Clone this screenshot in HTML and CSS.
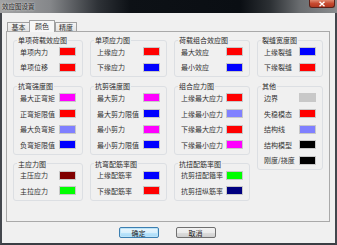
FILE: index.html
```html
<!DOCTYPE html>
<html lang="zh-CN">
<head>
<meta charset="utf-8">
<title>效应图设置</title>
<link rel="stylesheet" href="styles.css">
</head>
<body>
<div class="window">
  <div class="titlebar">
    <span class="title">效应图设置</span>
    <span class="close"><svg width="8" height="6" viewBox="0 0 8 6"><path d="M1.5 0.8 L6.5 5.2 M6.5 0.8 L1.5 5.2" stroke="#fff" stroke-width="1.4" fill="none"/></svg></span>
  </div>
  <div class="frame">
    <div class="tabs">
      <div class="tab tab-basic">基本</div>
      <div class="tab tab-active">颜色</div>
      <div class="tab tab-prec">精度</div>
    </div>
    <div class="panel">
      <div class="groups">
        <fieldset class="group">
          <legend>单项荷载效应图</legend>
          <div class="item"><span>单项内力</span><i class="sw red"></i></div>
          <div class="item"><span>单项位移</span><i class="sw red"></i></div>
        </fieldset>
        <fieldset class="group">
          <legend>单项应力图</legend>
          <div class="item"><span>上缘应力</span><i class="sw red"></i></div>
          <div class="item"><span>下缘应力</span><i class="sw blue"></i></div>
        </fieldset>
        <fieldset class="group">
          <legend>荷载组合效应图</legend>
          <div class="item"><span>最大效应</span><i class="sw red"></i></div>
          <div class="item"><span>最小效应</span><i class="sw blue"></i></div>
        </fieldset>
        <fieldset class="group">
          <legend>裂缝宽度图</legend>
          <div class="item"><span>上缘裂缝</span><i class="sw blue"></i></div>
          <div class="item"><span>下缘裂缝</span><i class="sw red"></i></div>
        </fieldset>

        <fieldset class="group">
          <legend>抗弯强度图</legend>
          <div class="item"><span>最大正弯矩</span><i class="sw magenta"></i></div>
          <div class="item"><span>正弯矩限值</span><i class="sw red"></i></div>
          <div class="item"><span>最大负弯矩</span><i class="sw lavender"></i></div>
          <div class="item"><span>负弯矩限值</span><i class="sw blue"></i></div>
        </fieldset>
        <fieldset class="group">
          <legend>抗剪强度图</legend>
          <div class="item"><span>最大剪力</span><i class="sw magenta"></i></div>
          <div class="item"><span>最大剪力限值</span><i class="sw blue"></i></div>
          <div class="item"><span>最小剪力</span><i class="sw magenta"></i></div>
          <div class="item"><span>最小剪力限值</span><i class="sw blue"></i></div>
        </fieldset>
        <fieldset class="group">
          <legend>组合应力图</legend>
          <div class="item"><span>上缘最大应力</span><i class="sw red"></i></div>
          <div class="item"><span>上缘最小应力</span><i class="sw lavender"></i></div>
          <div class="item"><span>下缘最大应力</span><i class="sw red"></i></div>
          <div class="item"><span>下缘最小应力</span><i class="sw magenta"></i></div>
        </fieldset>
        <fieldset class="group group-other">
          <legend>其他</legend>
          <div class="item"><span>边界</span><i class="sw grey"></i></div>
          <div class="item"><span>失稳模态</span><i class="sw red"></i></div>
          <div class="item"><span>结构线</span><i class="sw lavender"></i></div>
          <div class="item"><span>结构模型</span><i class="sw black"></i></div>
          <div class="item"><span>刚度/挠度</span><i class="sw black"></i></div>
        </fieldset>

        <fieldset class="group">
          <legend>主应力图</legend>
          <div class="item"><span>主压应力</span><i class="sw darkred"></i></div>
          <div class="item"><span>主拉应力</span><i class="sw green"></i></div>
        </fieldset>
        <fieldset class="group">
          <legend>抗弯配筋率图</legend>
          <div class="item"><span>上缘配筋率</span><i class="sw blue"></i></div>
          <div class="item"><span>下缘配筋率</span><i class="sw red"></i></div>
        </fieldset>
        <fieldset class="group">
          <legend>抗扭配筋率图</legend>
          <div class="item"><span>抗剪扭配箍率</span><i class="sw green"></i></div>
          <div class="item"><span>抗剪扭纵筋率</span><i class="sw navy"></i></div>
        </fieldset>
      </div>
    </div>
    <div class="buttons">
      <div class="btn btn-default">确定</div>
      <div class="btn">取消</div>
    </div>
  </div>
</div>
</body>
</html>
```

FILE: styles.css
```css
html, body {
  margin: 0;
  padding: 0;
  background: #3c4046;
}
body {
  font-family: "Noto Sans CJK SC", "Noto Sans", sans-serif;
  font-size: 7px;
  color: #333;
}
.window {
  width: 337px;
  height: 245px;
  display: flex;
  flex-direction: column;
  overflow: hidden;
}
.titlebar {
  height: 13px;
  flex: none;
  display: flex;
  align-items: flex-start;
  background: linear-gradient(to right, #a2a3a4 0px, #85878a 50px, #2e3237 98px, #0d1116 130px, #0a0e13 240px, #2c3034 270px, #6a6d70 300px, #8a8c8e 337px);
}
.title {
  padding-left: 2px;
  line-height: 12px;
  font-size: 6.5px;
  color: #1c1c1c;
  text-shadow: 0 0 2px #d8d8d8, 0 0 2px #d8d8d8;
}
.close {
  margin-left: auto;
  margin-right: 2px;
  width: 26px;
  height: 8px;
  box-sizing: border-box;
  border: 1px solid #5a2018;
  border-top: none;
  border-radius: 0 0 3px 3px;
  background: linear-gradient(#e08a70, #c74a30 50%, #b03820);
  display: flex;
  align-items: center;
  justify-content: center;
}
.close svg { display: block; }
.frame {
  flex: 1;
  background: #f0f0f0;
  border-left: 2px solid #43474d;
  border-right: 2px solid #43474d;
  border-bottom: 2px solid #3a3e44;
  padding: 7px 5px 0 4px;
  display: flex;
  flex-direction: column;
}
.tabs {
  height: 11px;
  display: flex;
  align-items: flex-end;
  padding-left: 1px;
  flex: none;
}
.tab {
  box-sizing: border-box;
  height: 9px;
  border: 1px solid #a0a0a0;
  border-bottom: none;
  background: linear-gradient(#f4f4f4, #e3e3e3);
  display: flex;
  align-items: center;
  justify-content: center;
  line-height: 8px;
  border-radius: 1px 1px 0 0;
}
.tab-basic { width: 23px; }
.tab-active {
  width: 26px;
  height: 12px;
  margin-left: -1px;
  margin-bottom: -1px;
  background: #f7f7f7;
  position: relative;
  z-index: 1;
  padding-bottom: 1px;
}
.tab-prec { width: 22px; }
.panel {
  box-sizing: border-box;
  height: 191px;
  border: 1px solid #a9a9a9;
  background: #f0f0f0;
  flex: none;
}
.groups {
  display: grid;
  grid-template-columns: 70px 77px 76px 66px;
  column-gap: 7px;
  row-gap: 5px;
  align-items: start;
  padding: 4px 0 0 6px;
}
.group {
  margin: 0;
  min-width: 0;
  padding: 0 6px 1px 3px;
  border: 1px solid #dcdfe3;
  border-radius: 3px;
}
.group legend {
  padding: 0 1px;
  line-height: 8px;
  height: 8px;
  font-size: 7px;
  color: #2a2a2a;
}
.group-other {
  grid-row: span 2;
}
.item {
  height: 15.6px;
  display: flex;
  align-items: center;
  justify-content: space-between;
  padding-left: 3px;
  line-height: 8px;
  white-space: nowrap;
}
.sw {
  display: block;
  box-sizing: border-box;
  width: 17px;
  height: 9px;
  border: 1px solid #c8c8c8;
  flex: none;
}
.red { background: #ff0000; }
.blue { background: #0000ff; }
.magenta { background: #ff00ff; }
.lavender { background: #8080ff; }
.grey { background: #c8c8c8; }
.black { background: #000000; }
.darkred { background: #800000; }
.green { background: #00ff00; }
.navy { background: #000080; }
.buttons {
  margin-top: 5px;
  display: flex;
  justify-content: center;
  gap: 17px;
  padding-right: 2px;
}
.btn {
  box-sizing: border-box;
  width: 40px;
  height: 11px;
  border: 1px solid #707070;
  border-radius: 2px;
  background: linear-gradient(#f2f2f2 0%, #ebebeb 50%, #dddddd 51%, #cfcfcf 100%);
  display: flex;
  align-items: center;
  justify-content: center;
  line-height: 8px;
  color: #1a1a1a;
}
.btn-default {
  border-color: #3c7fb1;
  background: linear-gradient(#eaf6fd 0%, #d9f0fc 50%, #bee6fd 51%, #a7d9f5 100%);
  box-shadow: inset 0 0 0 1px #bde4f8;
}
```
